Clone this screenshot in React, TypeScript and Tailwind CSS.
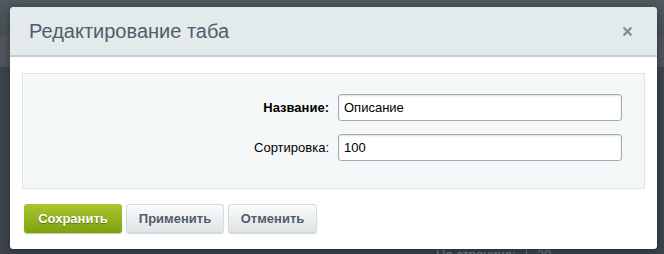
import { X } from 'lucide-react';

export default function App() {
  return (
    <div className="relative w-[664px] h-[254px] overflow-hidden bg-[#3c434b] font-['Liberation_Sans',Arial,sans-serif]">
      {/* page behind the dialog */}
      <div className="absolute inset-x-0 top-0 h-[35px] bg-gradient-to-b from-[#52585f] to-[#474d55]" />
      <div className="absolute left-0 top-[35px] w-full h-[32px] bg-[#4e545b]" />
      <div className="absolute left-[436px] top-[247px] flex items-center gap-[10px] text-[13px] leading-none text-[#7c848b]">
        <span>На странице:</span>
        <span className="w-px h-[14px] bg-[#6a7279]" />
        <span>20</span>
      </div>

      <div className="relative ml-[10px] mt-[7px] w-[647px] h-[242px] bg-white rounded-t-[4px] rounded-b-[3px] shadow-[0_2px_8px_rgba(0,0,0,0.35)] flex flex-col">
        <div className="h-[50px] shrink-0 flex items-center justify-between pl-[19px] pr-[23px] bg-[#e2eaec] border-b-2 border-[#c8cdd1] rounded-t-[4px]">
          <span className="text-[20px] text-[#535c69] leading-none">Редактирование таба</span>
          <X className="w-[13px] h-[13px] text-[#7d8898]" strokeWidth={4} />
        </div>

        <div className="mx-[12px] mt-[16px] h-[116px] bg-[#f5f8f9] border border-[#dbe5ea] pt-[20px] flex flex-col gap-[13px]">
          <div className="flex items-center gap-[9px]">
            <label className="w-[306px] text-right text-[13px] font-bold text-black">Название:</label>
            <div className="w-[284px] h-[27px] rounded-[3px] border border-[#a3a9b0] bg-white shadow-[inset_0_1px_2px_rgba(0,0,0,0.12)] px-[5px] flex items-center text-[13px] text-black">Описание</div>
          </div>
          <div className="flex items-center gap-[9px]">
            <label className="w-[306px] text-right text-[13px] text-black">Сортировка:</label>
            <div className="w-[284px] h-[27px] rounded-[3px] border border-[#a3a9b0] bg-white shadow-[inset_0_1px_2px_rgba(0,0,0,0.12)] px-[5px] flex items-center text-[13px] text-black">100</div>
          </div>
        </div>

        <div className="mt-[15px] ml-[14px] flex gap-[4px]">
          <button className="w-[98px] h-[29px] rounded-[3px] bg-gradient-to-b from-[#a9c62e] to-[#7ea20b] shadow-[0_1px_1px_rgba(0,0,0,0.25)] text-[13px] font-bold text-white [text-shadow:0_1px_1px_rgba(0,0,0,0.35)]">Сохранить</button>
          <button className="w-[98px] h-[29px] rounded-[3px] bg-gradient-to-b from-[#fafbfb] to-[#dfe5e8] border border-[#d5dadd] shadow-[0_1px_1px_rgba(0,0,0,0.18)] text-[13px] font-bold text-[#535c69]">Применить</button>
          <button className="w-[89px] h-[29px] rounded-[3px] bg-gradient-to-b from-[#fafbfb] to-[#dfe5e8] border border-[#d5dadd] shadow-[0_1px_1px_rgba(0,0,0,0.18)] text-[13px] font-bold text-[#535c69]">Отменить</button>
        </div>
      </div>
    </div>
  );
}
